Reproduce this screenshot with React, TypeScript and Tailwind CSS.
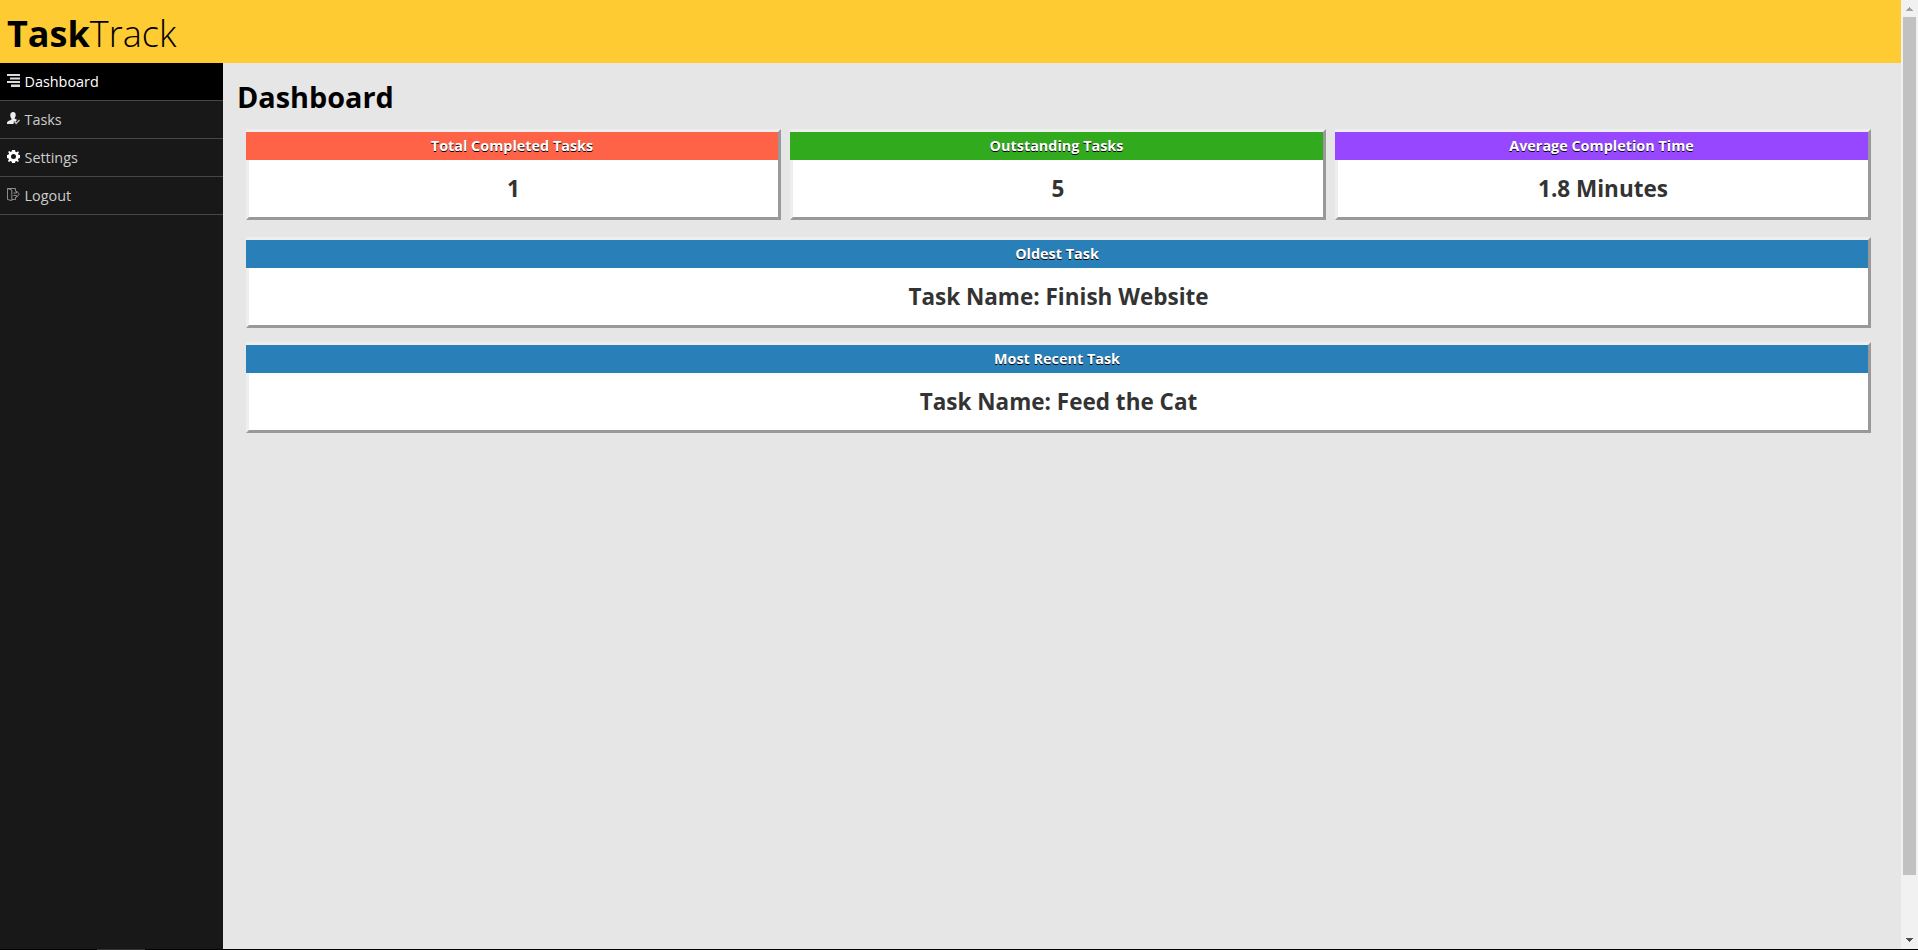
import type { ReactNode } from "react";

function NavItem({ label, active, children }: { label: string; active?: boolean; children: ReactNode }) {
  return (
    <a
      className={
        active
          ? "flex h-[38px] items-start border-b border-[#474747] bg-black pl-[7px] text-white"
          : "flex h-[38px] items-start border-b border-[#474747] pl-[7px] text-[#cccccc]"
      }
    >
      <svg viewBox="0 0 13 13" className="mt-[11px] h-[13px] w-[13px] shrink-0">
        {children}
      </svg>
      <span className="ml-[4.5px] mt-2 text-[14.4px] leading-[22px]">{label}</span>
    </a>
  );
}

function Card({ title, value, color, className = "" }: { title: string; value: string; color: string; className?: string }) {
  return (
    <section
      className={`h-[91px] min-w-0 border-[3px] border-b-[#999999] border-l-[#eeeeee] border-r-[#999999] border-t-[#eeeeee] bg-white text-center ${className}`}
    >
      <h3 className={`-ml-[3px] h-7 text-[14.4px] font-bold leading-7 text-white [text-shadow:0_1px_0_#000] ${color}`}>
        {title}
      </h3>
      <p className="text-[22.5px] font-bold leading-[58px] text-[#333333]">{value}</p>
    </section>
  );
}

export default function App() {
  return (
    <div className="flex h-[950px] w-[1918px] flex-col overflow-hidden bg-black font-['Open_Sans',sans-serif]">
      <div className="flex h-[949px]">
        <div className="flex flex-1 flex-col bg-[#e6e6e6]">
          <header className="h-[63px] bg-[#ffcb33] pl-[7px] pt-[7px] text-[36px] leading-[54px] text-black">
            <span className="font-bold">Task</span>
            <span className="font-light">Track</span>
          </header>
          <div className="flex flex-1">
            <nav className="w-[223px] bg-[#181818]">
              <NavItem label="Dashboard" active>
                <path d="M0 0h13v2H0zM3 3.500h10v2H3zM0 7h13v2H0zM4 10.500h9v2.500H4z" fill="#ddd" />
              </NavItem>
              <NavItem label="Tasks">
                <path d="M6 0C8 0 9 1.500 8.700 3.500 8.500 5 7.800 5.800 7.500 6.500L10 7.800 8.500 10 7 9 6.500 12H0V10.500C.5 8.800 3 8.500 4.500 7.500V6.500C3.500 5.500 3.200 4 3.300 2.500 3.500 1 4.500 0 6 0Z" fill="#eee" />
                <path d="M7.500 9.500 9.200 11.500 12.500 8" fill="none" stroke="#bbb" strokeWidth="1.500" />
              </NavItem>
              <NavItem label="Settings">
                <path
                  fillRule="evenodd"
                  fill="#fff"
                  d="M5 0h3l.4 1.700 1.100.5L11 1.200 12 2.300l-1 1.500.4 1L13 5v3l-1.600.4-.5 1.100 1 1.500-1.100 1-1.500-.9-1 .4L8 13H5l-.4-1.600-1.100-.5L2 11.900.9 10.900l1-1.500-.4-1L0 8V5l1.600-.4.5-1.100L1.100 2.100 2.200 1.100 3.600 2.100l1-.5ZM6.500 4a2.500 2.500 0 1 0 0 5 2.500 2.500 0 0 0 0-5Z"
                />
              </NavItem>
              <NavItem label="Logout">
                <path d="M.5.5H8.500V3.500M8.500 9V11.500H5M.5.5 4.800 2V12.600L.5 11.500ZM6.500 5H9.500V3L12.300 6.200 9.500 9.300V7.500H6.500" fill="none" stroke="#999" strokeWidth=".9" />
              </NavItem>
            </nav>
            <main className="flex-1 pl-[14px]">
              <h1 className="mt-[13px] h-[53px] text-[28.8px] font-bold leading-[42px] text-black">Dashboard</h1>
              <div className="ml-[9px] flex w-[1625px] flex-col">
                <div className="mb-[17px] grid grid-cols-[535px_536px_536px] gap-[9px]">
                  <Card title="Total Completed Tasks" value="1" color="bg-[#ff6347]" />
                  <Card title="Outstanding Tasks" value="5" color="bg-[#31ab1d]" />
                  <Card title="Average Completion Time" value="1.8 Minutes" color="bg-[#9747ff]" />
                </div>
                <Card title="Oldest Task" value="Task Name: Finish Website" color="bg-[#2980b9]" className="mb-[14px]" />
                <Card title="Most Recent Task" value="Task Name: Feed the Cat" color="bg-[#2980b9]" />
              </div>
            </main>
          </div>
        </div>
        <div className="flex w-[17px] flex-col items-center bg-[#f1f1f1]">
          <svg className="h-[17px] w-[17px]" viewBox="0 0 17 17" shapeRendering="crispEdges">
            <path d="M8 7h1v1h1v1h1v1h1v1H5v-1h1V9h1V8h1z" fill="#a3a3a3" />
          </svg>
          <div className="h-[858px] w-[13px] bg-[#c1c1c1]" />
          <svg className="mt-auto h-[17px] w-[17px]" viewBox="0 0 17 17" shapeRendering="crispEdges">
            <path d="M5 6h7v1h-1v1h-1v1H9v1H8V9H7V8H6V7H5z" fill="#505050" />
          </svg>
        </div>
      </div>
      <div className="ml-[97px] h-px w-12 bg-[#333333]" />
    </div>
  );
}
